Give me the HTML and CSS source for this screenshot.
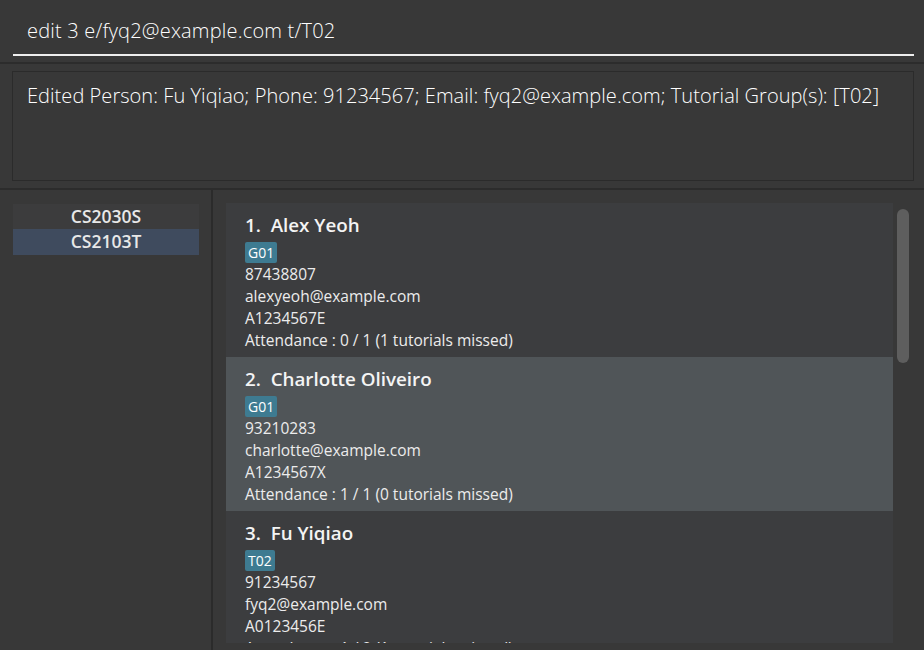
FILE: index.html
```html
<!DOCTYPE html>
<html>
<head>
<meta charset="utf-8">
<link rel="stylesheet" href="styles.css">
</head>
<body>
<div class="app">
  <div class="command">
    <div class="command-field">edit 3 e/fyq2@example.com t/T02</div>
  </div>
  <div class="result-wrap">
    <div class="result">Edited Person: Fu Yiqiao; Phone: 91234567; Email: fyq2@example.com; Tutorial Group(s): [T02]</div>
  </div>
  <div class="main">
    <div class="modules">
      <div class="module-list">
        <div class="module">CS2030S</div>
        <div class="module selected">CS2103T</div>
      </div>
    </div>
    <div class="divider"></div>
    <div class="persons">
      <div class="person-list">
        <div class="card">
          <div class="name">1.&nbsp; Alex Yeoh</div>
          <div class="tags"><span class="tag">G01</span></div>
          <div class="line">87438807</div>
          <div class="line">alexyeoh@example.com</div>
          <div class="line">A1234567E</div>
          <div class="line">Attendance : 0 / 1 (1 tutorials missed)</div>
        </div>
        <div class="card selected">
          <div class="name">2.&nbsp; Charlotte Oliveiro</div>
          <div class="tags"><span class="tag">G01</span></div>
          <div class="line">93210283</div>
          <div class="line">charlotte@example.com</div>
          <div class="line">A1234567X</div>
          <div class="line">Attendance : 1 / 1 (0 tutorials missed)</div>
        </div>
        <div class="card">
          <div class="name">3.&nbsp; Fu Yiqiao</div>
          <div class="tags"><span class="tag">T02</span></div>
          <div class="line">91234567</div>
          <div class="line">fyq2@example.com</div>
          <div class="line">A0123456E</div>
          <div class="line">Attendance : 1 / 2 (1 tutorials missed)</div>
        </div>
      </div>
      <div class="scrolltrack"><div class="thumb"></div></div>
    </div>
  </div>
</div>
</body>
</html>
```

FILE: styles.css
```css
* { box-sizing: border-box; }
html, body {
  margin: 0;
  padding: 0;
  background: #383838;
  width: 924px;
  height: 650px;
  overflow: hidden;
}
.app {
  display: flex;
  flex-direction: column;
  height: 650px;
  font-family: "Open Sans", "Noto Sans", sans-serif;
  color: #ffffff;
}
.command {
  height: 64px;
  padding: 0 10px 0 13px;
  border-bottom: 2px solid #2c2c2c;
}
.command-field {
  height: 56px;
  border-bottom: 2px solid #eeeeee;
  padding: 17px 0 0 14px;
  font-size: 20px;
  letter-spacing: 0.2px;
  font-weight: 300;
  color: #ffffff;
  line-height: 28px;
}
.result-wrap {
  height: 126px;
  padding: 7px 10px 0 12px;
  border-bottom: 2px solid #2c2c2c;
}
.result {
  height: 110px;
  border: 1px solid #2b2b2b;
  background: #383838;
  padding: 10px 0 0 14px;
  font-size: 20px;
  letter-spacing: 0.05px;
  font-weight: 300;
  line-height: 28px;
  color: #ffffff;
  white-space: nowrap;
}
.main {
  flex: 1;
  display: flex;
  min-height: 0;
}
.modules {
  width: 211px;
  padding: 14px 12px 0 13px;
}
.module-list {
  display: flex;
  flex-direction: column;
}
.module {
  height: 25px;
  background: #3c3c3d;
  text-align: center;
  font-weight: 600;
  font-size: 17.5px;
  line-height: 25px;
  color: #e8e8e8;
}
.module.selected {
  height: 26px;
  background: #3f4b5e;
}
.divider {
  width: 2px;
  background: #2b2b2b;
}
.persons {
  flex: 1;
  display: flex;
  padding: 13px 0 0 13px;
  min-width: 0;
}
.person-list {
  width: 667px;
  height: 440px;
  overflow: hidden;
  background: #3c3d3f;
}
.card {
  height: 154px;
  background: #3c3d3f;
  padding: 9px 0 0 19px;
}
.card.selected {
  background: #505558;
}
.name {
  font-size: 18.8px;
  font-weight: 600;
  line-height: 26px;
  color: #f4f4f4;
  white-space: pre;
}
.tags {
  display: flex;
  height: 21px;
  margin: 4px 0 0;
}
.tag {
  display: inline-block;
  height: 21px;
  background: #3e7b91;
  color: #ffffff;
  font-size: 14px;
  line-height: 21px;
  padding: 0 3px;
  border-radius: 2px;
}
.line {
  font-size: 15.5px;
  line-height: 22px;
  color: #ececec;
  white-space: nowrap;
}
.scrolltrack {
  width: 31px;
  padding: 6px 0 0 4px;
}
.thumb {
  width: 12px;
  height: 154px;
  background: #5e5e5e;
  border-radius: 6px;
}
```
